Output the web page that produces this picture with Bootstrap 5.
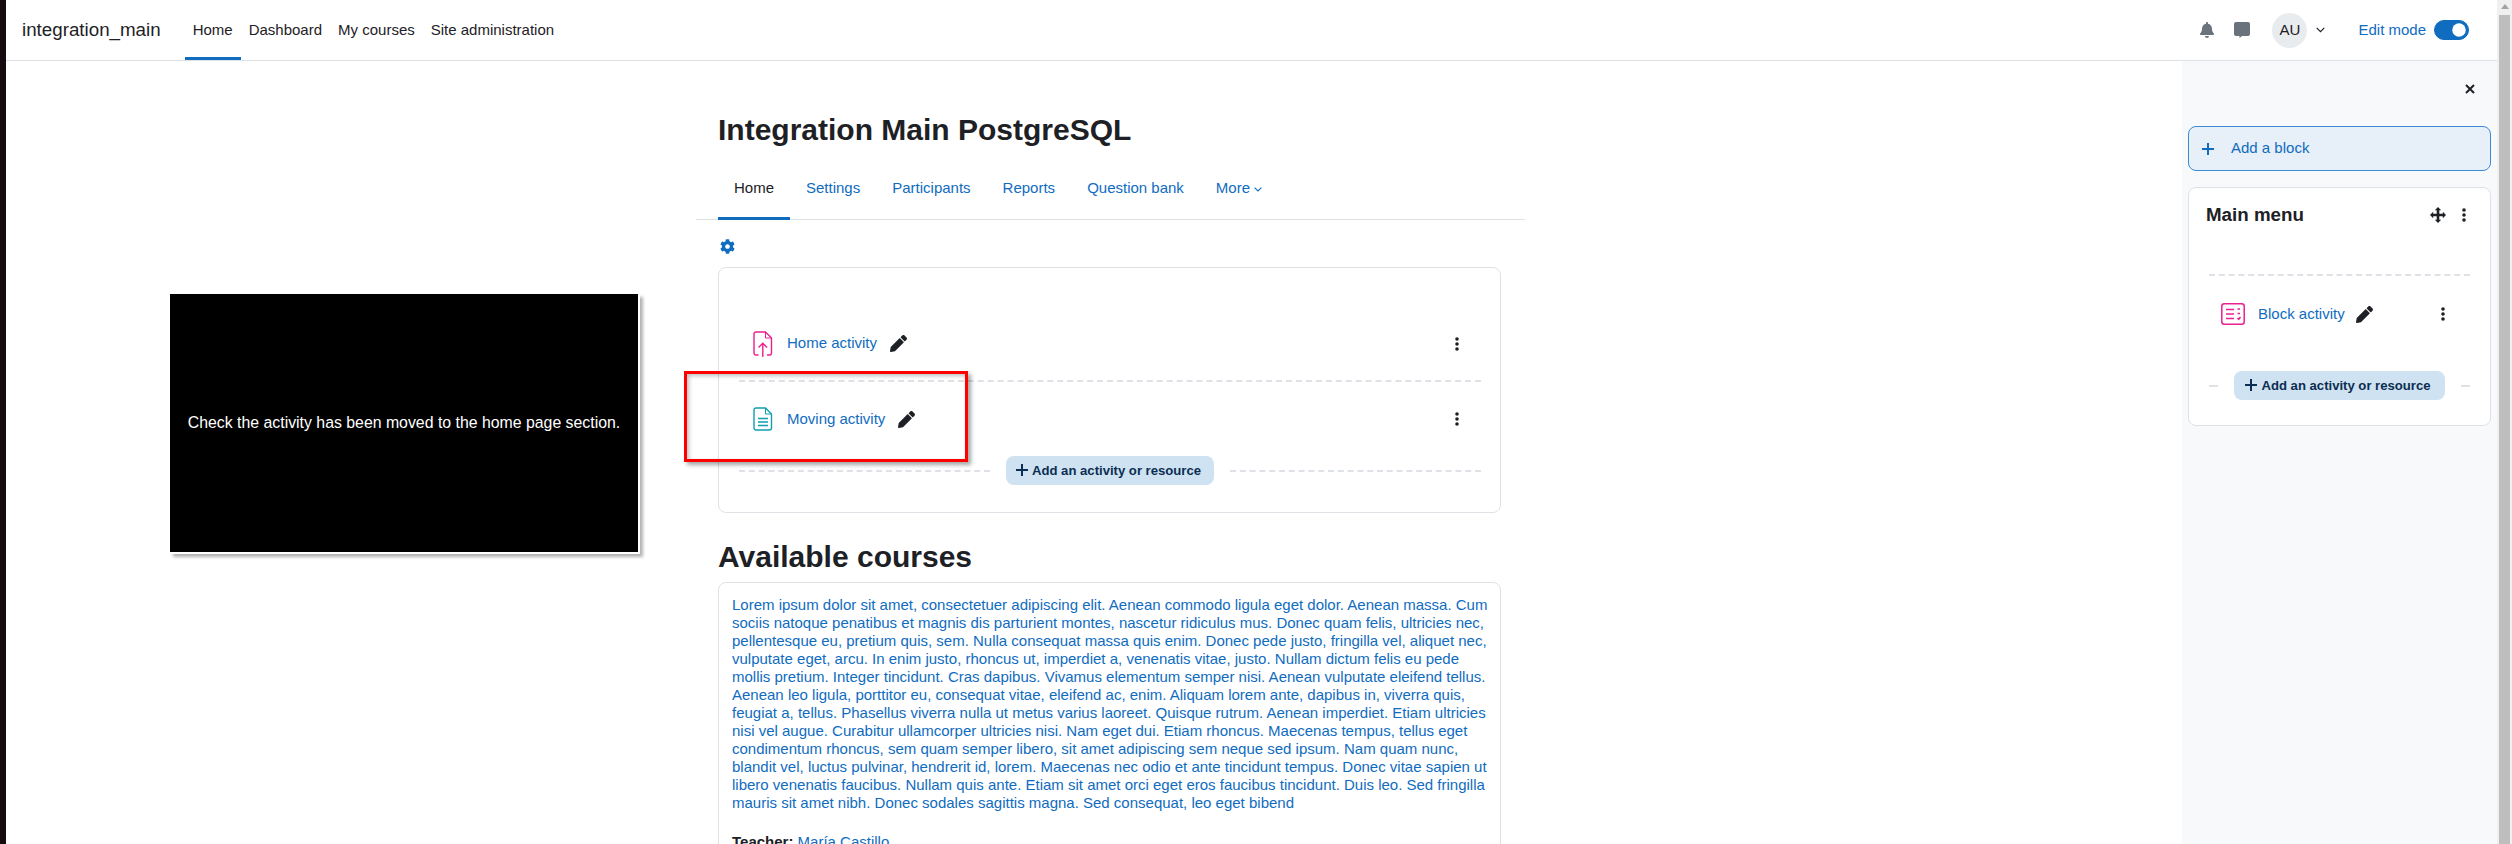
<!DOCTYPE html>
<html lang="en">

<head>
    <meta charset="UTF-8">
    <meta name="viewport" content="width=device-width, initial-scale=1">
    <title>integration_main</title>
    <link href="https://cdn.jsdelivr.net/npm/bootstrap@5.3.0/dist/css/bootstrap.min.css" rel="stylesheet">
    <style>
        body {
            font-family: "Liberation Sans", Arial, sans-serif;
            font-size: 15px;
            line-height: 22.5px;
            color: #1d2125;
            height: 844px;
            background: #fff;
        }

        a { color: #0f6cbf; text-decoration: none; }

        .left-strip { width: 6px; background: #140c10; }

        .page-wrap { width: 2491px; }

        .scroll-track { width: 15px; background: #f0f0f0; padding: 4px 2px 0; }
        .scroll-arrow { width: 0; height: 0; margin: 0 auto 6px; border: 4px solid transparent; border-top: 0; border-bottom: 5px solid #a3a3a3; }
        .scroll-thumb { background: #bebebe; height: 100%; }

        /* top bar */
        .top-bar { height: 61px; padding: 0 28px 0 16px; border-bottom: 1px solid #dee2e6; }
        .top-bar .navbar-brand { font-size: 18.75px; line-height: 28px; padding: 0; margin-right: 24px; color: #1d2125; }
        .top-bar .nav-link {
            height: 60px;
            display: flex;
            align-items: center;
            padding: 0 8px;
            color: #1d2125;
            border-top: 3px solid transparent;
            border-bottom: 3px solid transparent;
        }
        .top-bar .nav-link.active { border-bottom-color: #0f6cbf; color: #1d2125; }
        .msg-icon { margin-left: 20px; }
        .user-avatar { width: 35px; height: 35px; background: #e9ecef; margin-left: 22px; }
        .user-caret { margin-left: 9px; }
        .edit-label { color: #0f6cbf; margin-left: 33px; margin-right: 8px; }
        .edit-switch { padding: 0; margin: 0; min-height: 0; height: 20px; }
        .edit-switch .form-check-input { width: 35px; height: 20px; margin: 0; float: none; display: block; background-color: #0f6cbf; border-color: #0f6cbf; }

        /* main column */
        .main-area { padding-left: 690px; width: 2176px; }
        .main-col { width: 829px; }
        .page-title { font-size: 30px; line-height: 36px; font-weight: 700; margin: 51px 0 8px 22px; }
        .course-tabs { border-bottom: 1px solid #dee2e6; padding-left: 22px; height: 64px; }
        .course-tabs .nav-link { height: 64px; padding: 21px 16px 0; color: #0f6cbf; border-bottom: 3px solid transparent; }
        .course-tabs .nav-link.active { color: #1d2125; border-bottom-color: #0f6cbf; }
        .gear-row { margin: 19px 0 13px 24px; height: 15px; }
        .frontpage-box { margin-left: 22px; width: 783px; border-radius: 8px; border-color: #dee2e6; padding: 39px 19px 27px 20px; }
        .activity-row { padding: 0 22px 0 14px; height: 75px; border-bottom: 2px dashed #dee2e6; }
        .activity-row.last-row { border-bottom: 0; height: 74px; }
        .activity-link { margin-left: 14px; margin-right: 13px; }
        .dash-line { border-top: 2px dashed #dee2e6; height: 0; }
        .add-activity {
            font-size: 13.125px;
            line-height: 19px;
            font-weight: 700;
            color: #0b2e52;
            background: #cfe2f1;
            border: 0;
            border-radius: 8px;
            height: 29px;
            padding: 0 13px 0 10px;
            white-space: nowrap;
        }
        .add-activity:hover { background: #cfe2f1; color: #0b2e52; }
        .plus-mark { color: #0b2e52; margin-right: 4px; vertical-align: -1px; }
        .section-heading { font-size: 30px; line-height: 36px; font-weight: 700; margin: 26px 0 7px 22px; }
        .course-box { margin-left: 22px; width: 783px; border-radius: 8px 8px 0 0; border-color: #dee2e6; padding: 13px 12px 60px 13px; font-size: 15px; line-height: 18px; }
        .course-box p { margin: 0 0 21px; }

        /* right drawer */
        .block-drawer { width: 315px; background: #f8f9fa; padding: 20px 6px 0 6px; }
        .drawer-close { height: 16px; padding-right: 16px; margin-bottom: 29px; }
        .add-block {
            height: 45px;
            background: #e7eff8;
            border: 1px solid #3a8ad6;
            border-radius: 8px;
            color: #0f6cbf;
            padding: 0 0 0 13px;
            margin-bottom: 16px;
        }
        .add-block-text { margin-left: 17px; }
        .block-box { border-radius: 8px; border-color: #dee2e6; padding: 16px 20px 25px 20px; height: 239px; }
        .block-title { font-size: 18.75px; line-height: 22px; font-weight: 700; margin: 0 0 0 -3px; }
        .block-head-icons { gap: 16px; padding-right: 4px; }
        .block-top-dash { margin-top: 48px; }
        .block-row { height: 76px; padding: 0 25px 0 12px; margin-bottom: 19px; }
        .block-link { margin-left: 13px; margin-right: 11px; }
        .block-box .add-activity { padding: 0 14px 0 11px; }

        /* annotations drawn over the page */
        .note-box {
            position: absolute;
            left: 170px;
            top: 294px;
            width: 470px;
            height: 260px;
            background: #000;
            border-right: 2px solid #fff;
            border-bottom: 2px solid #fff;
            box-shadow: 3px 3px 3px rgba(0, 0, 0, .3);
            color: #fff;
            font-size: 15.85px;
            white-space: nowrap;
        }
        .red-frame {
            position: absolute;
            left: 684px;
            top: 371px;
            width: 284px;
            height: 91px;
            border: 3px solid #f00;
            box-shadow: 3px 3px 4px rgba(0, 0, 0, .35), inset 2px 2px 4px rgba(0, 0, 0, .25);
        }
    </style>
</head>

<body class="d-flex overflow-hidden">
    <svg width="0" height="0" class="position-absolute">
        <symbol id="i-pencil" viewBox="0 0 512 512"><path fill="#1d2125" d="M497.9 142.1l-46.1 46.1c-4.7 4.7-12.3 4.7-17 0l-111-111c-4.7-4.7-4.7-12.3 0-17l46.1-46.1c18.7-18.7 49.1-18.7 67.9 0l60.1 60.1c18.8 18.7 18.8 49.1 0 67.9zM284.2 99.8L21.6 362.4.4 483.9c-2.9 16.4 11.4 30.6 27.8 27.8l121.5-21.3 262.6-262.6c4.7-4.7 4.7-12.3 0-17l-111-111c-4.8-4.7-12.4-4.7-17.1 0z"/></symbol>
        <symbol id="i-kebab" viewBox="0 0 4 14"><circle cx="2" cy="2" r="1.8" fill="#1d2125"/><circle cx="2" cy="7" r="1.8" fill="#1d2125"/><circle cx="2" cy="12" r="1.8" fill="#1d2125"/></symbol>
        <symbol id="i-plus" viewBox="0 0 12 12"><path d="M6 0v12M0 6h12" stroke="currentColor" stroke-width="2" fill="none"/></symbol>
    </svg>

    <div class="left-strip flex-shrink-0"></div>

    <div class="page-wrap flex-shrink-0">
        <nav class="navbar navbar-expand top-bar bg-white flex-nowrap">
            <a class="navbar-brand" href="#">integration_main</a>
            <ul class="navbar-nav">
                <li class="nav-item"><a class="nav-link active" href="#">Home</a></li>
                <li class="nav-item"><a class="nav-link" href="#">Dashboard</a></li>
                <li class="nav-item"><a class="nav-link" href="#">My courses</a></li>
                <li class="nav-item"><a class="nav-link" href="#">Site administration</a></li>
            </ul>
            <div class="d-flex align-items-center ms-auto">
                <svg width="14" height="16" viewBox="0 0 448 512"><path fill="#6a737b" d="M224 512c35.32 0 63.97-28.65 63.97-64H160.03c0 35.35 28.65 64 63.97 64zm215.39-149.71c-19.32-20.76-55.47-51.99-55.47-154.29 0-77.7-54.48-139.9-127.94-155.16V32c0-17.67-14.32-32-31.98-32s-31.98 14.33-31.98 32v20.84C118.56 68.1 64.08 130.3 64.08 208c0 102.3-36.15 133.53-55.47 154.29-6 6.45-8.66 14.16-8.61 21.71.11 16.4 12.98 32 32.1 32h383.8c19.12 0 32-15.6 32.1-32 .05-7.55-2.61-15.27-8.61-21.71z"/></svg>
                <svg class="msg-icon" width="16" height="16" viewBox="0 0 16 16"><path fill="#6a737b" d="M2 0h12a2 2 0 0 1 2 2v10a2 2 0 0 1-2 2H8l-2.5 2v-2H2a2 2 0 0 1-2-2V2a2 2 0 0 1 2-2z"/></svg>
                <div class="user-avatar rounded-circle d-flex align-items-center justify-content-center">AU</div>
                <svg class="user-caret" width="9" height="6" viewBox="0 0 9 6"><path d="M.7.8l3.8 3.8L8.3.8" stroke="#1d2125" stroke-width="1.2" fill="none"/></svg>
                <span class="edit-label">Edit mode</span>
                <div class="form-check form-switch edit-switch">
                    <input class="form-check-input" type="checkbox" role="switch" checked aria-label="Edit mode">
                </div>
            </div>
        </nav>

        <div class="d-flex">
            <main class="main-area flex-shrink-0">
                <div class="main-col">
                    <h2 class="page-title">Integration Main PostgreSQL</h2>
                    <ul class="nav course-tabs">
                        <li class="nav-item"><a class="nav-link active" href="#">Home</a></li>
                        <li class="nav-item"><a class="nav-link" href="#">Settings</a></li>
                        <li class="nav-item"><a class="nav-link" href="#">Participants</a></li>
                        <li class="nav-item"><a class="nav-link" href="#">Reports</a></li>
                        <li class="nav-item"><a class="nav-link" href="#">Question bank</a></li>
                        <li class="nav-item"><a class="nav-link" href="#">More <svg width="8" height="5" viewBox="0 0 8 5" class="align-middle"><path d="M.6.7L4 4l3.4-3.3" stroke="#0f6cbf" stroke-width="1.1" fill="none"/></svg></a></li>
                    </ul>
                    <div class="gear-row">
                        <svg class="d-block" width="15" height="15" viewBox="0 0 512 512"><path fill="#0f6cbf" d="M487.4 315.7l-42.6-24.6c4.3-23.2 4.3-47 0-70.2l42.6-24.6c4.9-2.8 7.1-8.6 5.5-14-11.1-35.6-30-67.8-54.7-94.6-3.8-4.1-10-5.1-14.8-2.3L380.8 110c-17.9-15.4-38.5-27.3-60.8-35.1V25.8c0-5.6-3.9-10.5-9.4-11.7-36.7-8.2-74.3-7.8-109.2 0-5.5 1.2-9.4 6.1-9.4 11.7V75c-22.2 7.9-42.8 19.8-60.8 35.1L88.7 85.5c-4.9-2.8-11-1.9-14.8 2.3-24.7 26.7-43.6 58.9-54.7 94.6-1.7 5.4.6 11.2 5.5 14L67.3 221c-4.3 23.2-4.3 47 0 70.2l-42.6 24.6c-4.9 2.8-7.1 8.6-5.5 14 11.1 35.6 30 67.8 54.7 94.6 3.8 4.1 10 5.1 14.8 2.3l42.6-24.6c17.9 15.4 38.5 27.3 60.8 35.1v49.2c0 5.6 3.9 10.5 9.4 11.7 36.7 8.2 74.3 7.8 109.2 0 5.5-1.2 9.4-6.1 9.4-11.7v-49.2c22.2-7.9 42.8-19.8 60.8-35.1l42.6 24.6c4.9 2.8 11 1.9 14.8-2.3 24.7-26.7 43.6-58.9 54.7-94.6 1.5-5.5-.7-11.3-5.6-14.1zM256 336c-44.1 0-80-35.9-80-80s35.9-80 80-80 80 35.9 80 80-35.9 80-80 80z"/></svg>
                    </div>

                    <div class="card frontpage-box">
                        <div class="activity-row d-flex align-items-center">
                            <svg width="20" height="26" viewBox="0 0 20 26" fill="none" stroke="#ec1f8e" stroke-width="1.4"><path d="M5.5 24H3a2 2 0 0 1-2-2V3a2 2 0 0 1 2-2h9.5L18.5 7v15a2 2 0 0 1-2 2H14"/><path d="M12.5 1v6h6" stroke-width="1"/><path d="M9.8 26V12.5M5.5 16.5l4.3-4.3 4.3 4.3"/></svg>
                            <a class="activity-link" href="#">Home activity</a>
                            <svg width="17" height="17"><use href="#i-pencil"/></svg>
                            <svg class="ms-auto" width="4" height="14"><use href="#i-kebab"/></svg>
                        </div>
                        <div class="activity-row last-row d-flex align-items-center">
                            <svg width="20" height="24" viewBox="0 0 20 24" fill="none" stroke="#0f9fb1" stroke-width="1.4"><path d="M3 1h9.5L18.5 7v14a2 2 0 0 1-2 2H3a2 2 0 0 1-2-2V3a2 2 0 0 1 2-2z"/><path d="M12.5 1v6h6" stroke-width="1"/><path d="M5 11.5h10M5 15h10M5 18.5h10" stroke-width="1.6"/></svg>
                            <a class="activity-link" href="#">Moving activity</a>
                            <svg width="17" height="17"><use href="#i-pencil"/></svg>
                            <svg class="ms-auto" width="4" height="14"><use href="#i-kebab"/></svg>
                        </div>
                        <div class="d-flex align-items-center gap-3">
                            <div class="dash-line flex-grow-1"></div>
                            <button class="btn add-activity" type="button"><svg class="plus-mark" width="12" height="12"><use href="#i-plus"/></svg>Add an activity or resource</button>
                            <div class="dash-line flex-grow-1"></div>
                        </div>
                    </div>

                    <h2 class="section-heading">Available courses</h2>
                    <div class="card course-box">
                        <p><a href="#">Lorem ipsum dolor sit amet, consectetuer adipiscing elit. Aenean commodo ligula eget dolor. Aenean massa. Cum sociis natoque penatibus et magnis dis parturient montes, nascetur ridiculus mus. Donec quam felis, ultricies nec, pellentesque eu, pretium quis, sem. Nulla consequat massa quis enim. Donec pede justo, fringilla vel, aliquet nec, vulputate eget, arcu. In enim justo, rhoncus ut, imperdiet a, venenatis vitae, justo. Nullam dictum felis eu pede mollis pretium. Integer tincidunt. Cras dapibus. Vivamus elementum semper nisi. Aenean vulputate eleifend tellus. Aenean leo ligula, porttitor eu, consequat vitae, eleifend ac, enim. Aliquam lorem ante, dapibus in, viverra quis, feugiat a, tellus. Phasellus viverra nulla ut metus varius laoreet. Quisque rutrum. Aenean imperdiet. Etiam ultricies nisi vel augue. Curabitur ullamcorper ultricies nisi. Nam eget dui. Etiam rhoncus. Maecenas tempus, tellus eget condimentum rhoncus, sem quam semper libero, sit amet adipiscing sem neque sed ipsum. Nam quam nunc, blandit vel, luctus pulvinar, hendrerit id, lorem. Maecenas nec odio et ante tincidunt tempus. Donec vitae sapien ut libero venenatis faucibus. Nullam quis ante. Etiam sit amet orci eget eros faucibus tincidunt. Duis leo. Sed fringilla mauris sit amet nibh. Donec sodales sagittis magna. Sed consequat, leo eget bibend</a></p>
                        <div><strong>Teacher:</strong> <a href="#">María Castillo</a></div>
                    </div>
                </div>
            </main>

            <aside class="block-drawer flex-shrink-0">
                <div class="drawer-close d-flex justify-content-end align-items-center">
                    <svg width="10" height="10" viewBox="0 0 10 10"><path d="M1 1l8 8M9 1l-8 8" stroke="#1d2125" stroke-width="2" fill="none"/></svg>
                </div>
                <a class="add-block d-flex align-items-center" href="#">
                    <svg width="12" height="12"><use href="#i-plus"/></svg>
                    <span class="add-block-text">Add a block</span>
                </a>
                <div class="card block-box">
                    <div class="d-flex align-items-center justify-content-between">
                        <h5 class="block-title">Main menu</h5>
                        <div class="d-flex align-items-center block-head-icons">
                            <svg width="16" height="16" viewBox="0 0 16 16"><path fill="#1d2125" d="M8 0l3.2 3.2H9.3v3.5h3.5V4.8L16 8l-3.2 3.2V9.3H9.3v3.5h1.9L8 16l-3.2-3.2h1.9V9.3H3.2v1.9L0 8l3.2-3.2v1.9h3.5V3.2H4.8z"/></svg>
                            <svg width="4" height="14"><use href="#i-kebab"/></svg>
                        </div>
                    </div>
                    <div class="dash-line block-top-dash"></div>
                    <div class="block-row d-flex align-items-center">
                        <svg width="24" height="22" viewBox="0 0 24 22" fill="none" stroke="#ec1f8e"><rect x=".8" y=".8" width="22.4" height="20.4" rx="2.5" stroke-width="1.5"/><path d="M5 6.5h8M5 11h8M5 15.5h8" stroke-width="1.5"/><path d="M16.5 6h2.5M16.5 10.5h2.5M16.5 15l1.2 1.2 1.8-2.2" stroke-width="1.6"/></svg>
                        <a class="block-link" href="#">Block activity</a>
                        <svg width="17" height="17"><use href="#i-pencil"/></svg>
                        <svg class="ms-auto" width="4" height="14"><use href="#i-kebab"/></svg>
                    </div>
                    <div class="d-flex align-items-center gap-3">
                        <div class="dash-line flex-grow-1"></div>
                        <button class="btn add-activity" type="button"><svg class="plus-mark" width="12" height="12"><use href="#i-plus"/></svg>Add an activity or resource</button>
                        <div class="dash-line flex-grow-1"></div>
                    </div>
                </div>
            </aside>
        </div>

        <div class="note-box d-flex align-items-center justify-content-center">Check the activity has been moved to the home page section.</div>
        <div class="red-frame"></div>
    </div>

    <div class="scroll-track flex-shrink-0">
        <div class="scroll-arrow"></div>
        <div class="scroll-thumb"></div>
    </div>
</body>

</html>
